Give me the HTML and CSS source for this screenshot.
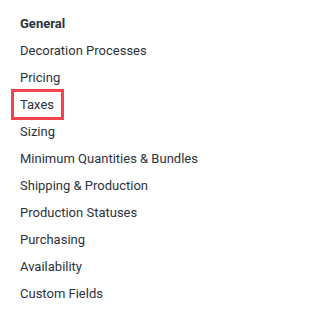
FILE: index.html
```html
<!DOCTYPE html>
<html>
<head>
<meta charset="utf-8">
<link rel="stylesheet" href="styles.css">
</head>
<body>
<nav class="menu">
  <div class="item heading">General</div>
  <div class="item">Decoration Processes</div>
  <div class="item">Pricing</div>
  <div class="item"><span class="highlight">Taxes</span></div>
  <div class="item">Sizing</div>
  <div class="item">Minimum Quantities &amp; Bundles</div>
  <div class="item">Shipping &amp; Production</div>
  <div class="item">Production Statuses</div>
  <div class="item">Purchasing</div>
  <div class="item">Availability</div>
  <div class="item">Custom Fields</div>
</nav>
</body>
</html>
```
FILE: styles.css
```css
html, body {
  margin: 0;
  padding: 0;
  background: #ffffff;
}
body {
  font-family: Roboto, "Liberation Sans", sans-serif;
  font-size: 13px;
  color: #2c3240;
}
.menu {
  display: flex;
  flex-direction: column;
  padding: 10px 0 0 20px;
}
.item {
  line-height: 27px;
  height: 27px;
  white-space: nowrap;
}
.heading {
  font-weight: 700;
}
.highlight {
  display: inline-block;
  padding: 0 8px 0 7px;
  margin-left: -7px;
  outline: 3.5px solid #f2444a;
  outline-offset: -1px;
}
```
